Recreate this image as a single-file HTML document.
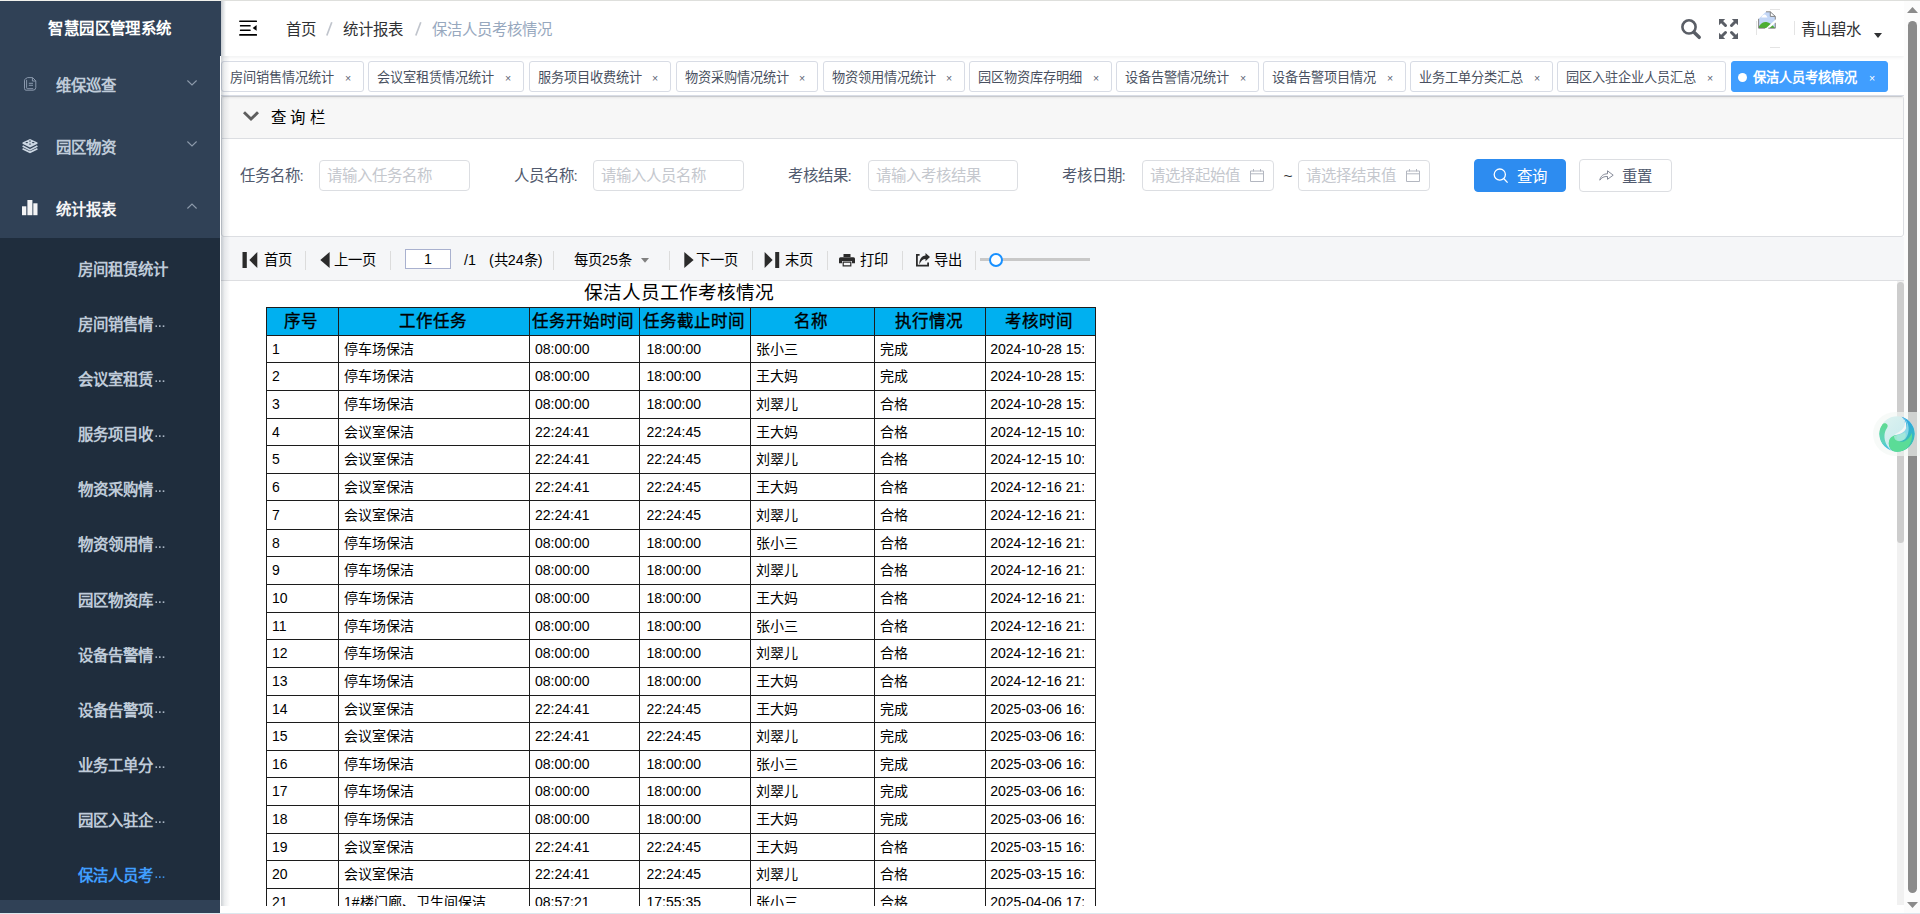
<!DOCTYPE html>
<html lang="zh-CN"><head><meta charset="utf-8"><title>智慧园区管理系统</title>
<style>
*{box-sizing:border-box;margin:0;padding:0}
html,body{width:1920px;height:914px;overflow:hidden;background:#fff;font-family:"Liberation Sans",sans-serif;color:#303133}
body{position:relative}
.a{position:absolute}
.t{position:absolute;white-space:nowrap}
svg{position:absolute;overflow:visible}
/* ---------- sidebar ---------- */
#side{position:absolute;left:0;top:0;width:220px;height:913px;background:#304156;z-index:5;overflow:hidden}
#logo{left:0;top:0;width:220px;height:56px;line-height:58px;text-align:center;color:#fff;font-weight:bold;font-size:15.4px;letter-spacing:.4px}
.mi{left:55.5px;height:30px;line-height:30px;color:#bfcbd9;font-size:15.4px;font-weight:bold}
#sub{position:absolute;left:0;top:238px;width:220px;height:662px;background:#1f2d3d}
.sub{left:77.5px;height:30px;line-height:30px;color:#bfcbd9;font-size:15.4px;font-weight:bold}
.sub.act{color:#409eff}
.el{font-size:11px;font-weight:bold;letter-spacing:0;position:relative;top:.2px;left:2.2px;opacity:.85}
/* ---------- navbar ---------- */
#nav{position:absolute;left:220px;top:0;width:1684px;height:56px;background:#fff;border-top:1px solid #dcdedc;box-shadow:0 1px 4px rgba(0,21,41,.08);z-index:3}
.bc{top:15px;height:30px;line-height:30px;font-size:15.4px;color:#303133}
.bc.sep{color:#c0c4cc;font-weight:bold;font-size:15px}
.bc.last{color:#97a8be}
/* ---------- tags ---------- */
#tags{position:absolute;left:220px;top:56px;width:1684px;height:40px;background:#fff;border-bottom:1px solid #d8dce5;box-shadow:0 1px 3px 0 rgba(0,0,0,.12),0 0 3px 0 rgba(0,0,0,.04);z-index:2}
.tag{position:absolute;top:61px;height:31px;border:1px solid #d8dce5;background:#fff;border-radius:3px;z-index:3}
.tag span{position:absolute;left:8px;top:1px;height:29px;line-height:30px;font-size:13.2px;color:#495060;white-space:nowrap}
.tag i{position:absolute;right:7px;top:1px;width:16px;height:29px;line-height:31px;text-align:center;font-style:normal;font-size:10.5px;color:#5d6472}
.tag.on{background:#409eff;border-color:#409eff}
.tag.on span{color:#fff;font-weight:bold;left:21px}
.tag.on i{color:#fff}
.tag.on b{position:absolute;left:6px;top:10.7px;width:9px;height:9px;border-radius:50%;background:#fff}
/* ---------- panel ---------- */
#panel{position:absolute;left:221px;top:96px;width:1683px;height:141px;border:1px solid #dcdee2;border-radius:3px;background:#fff;z-index:1}
#ph{position:absolute;left:0;top:0;width:1681px;height:42px;background:#f7f7f7;border-bottom:1px solid #dcdee2}
#pht{left:271px;top:103px;height:30px;line-height:30px;font-size:15.4px;color:#000;letter-spacing:4.3px;z-index:2}
.lab{top:160px;height:31px;line-height:31px;font-size:15.4px;color:#515a6e;z-index:2}
.inp{position:absolute;top:160px;height:31px;border:1px solid #dcdee2;border-radius:4px;background:#fff;z-index:2}
.inp span{position:absolute;left:7px;top:0;height:29px;line-height:30px;font-size:15.4px;color:#c5c8ce;white-space:nowrap}
.btn{position:absolute;top:159px;height:33px;border-radius:4px;border:1px solid #dcdee2;background:#fff;z-index:2}
.btn span{position:absolute;top:0;height:31px;line-height:33px;font-size:15.4px;color:#515a6e;white-space:nowrap}
.btn.pri{background:#2d8cf0;border-color:#2d8cf0}
.btn.pri span{color:#fff}
/* ---------- toolbar ---------- */
#tb{position:absolute;left:221px;top:237px;width:1683px;height:44px;background:#f5f6f8;border-bottom:1px solid #dddee1;z-index:1}
.tt{top:245px;height:30px;line-height:30px;font-size:14.3px;color:#000;z-index:2}
.sp{position:absolute;top:251px;width:1px;height:19px;background:#dcdcdc;z-index:2}
#pg{position:absolute;left:405px;top:249px;width:46px;height:20px;border:1px solid #a9b1cf;background:#fff;z-index:2;text-align:center;font-size:14.3px;line-height:18px;color:#000}
/* ---------- report ---------- */
#rep{position:absolute;left:221px;top:281px;width:1683px;height:625px;overflow:hidden;background:#fff}
#rin{position:absolute;left:-221px;top:-281px;width:1920px;height:1000px}
#ttl{left:263.7px;top:277.5px;width:830px;height:30px;line-height:30px;text-align:center;font-size:18.7px;color:#000}
.hd{position:absolute;background:#00b0f0}
.hl{position:absolute;left:266px;width:830px;height:1px;background:#1c1c1c}
.vl{position:absolute;top:307px;width:1px;height:620px;background:#1c1c1c}
.th{top:306px;height:30px;line-height:30px;text-align:center;font-size:16.5px;color:#000;-webkit-text-stroke:.35px #000}
.td{height:28px;line-height:28px;font-size:14px;color:#000;overflow:hidden}

</style></head>
<body>
<div id="side">
  <div id="logo" class="t">智慧园区管理系统</div>
  <!-- doc icon -->
  <svg style="left:23.6px;top:76.6px" width="13" height="14" viewBox="0 0 13 14" fill="none" stroke="#93a2b5" stroke-width=".9"><path d="M3.600 .600 H8.600 L11.800 3.800 V10.500 Q11.800 13.200 9 13.200 H2 Q.500 13.200 .500 11.500 V3.200 Q.500 2.400 1.500 1.800Z"/><path d="M2.600 2.800 V10.800 Q2.600 11.700 3.600 11.700 H9.200"/><path d="M8.400 .800 V4 H11.600"/><path d="M4.800 6.300 h4.200 M4.800 8.300 h4.200"/></svg>
  <!-- stack icon -->
  <svg style="left:21.7px;top:138.7px" width="16" height="14" viewBox="0 0 16 14"><path d="M8 0 L15.500 3.500 V4.700 L8 8.600 L.500 4.700 V3.500Z" fill="#cbd6e2"/><g fill="#304156"><ellipse cx="4.800" cy="3.600" rx="1.300" ry=".550"/><ellipse cx="11.200" cy="3.600" rx="1.300" ry=".550"/><ellipse cx="8" cy="1.900" rx="1.100" ry=".500"/><ellipse cx="8" cy="5.100" rx="1.100" ry=".500"/></g><path d="M.600 7.100 L8 10.900 L15.400 7.100M.600 9.700 L8 13.300 L15.400 9.700" fill="none" stroke="#cbd6e2" stroke-width="1.700"/></svg>
  <!-- bars icon -->
  <svg style="left:21.8px;top:199.8px" width="16" height="16" viewBox="0 0 16 16" fill="#f4f4f5"><rect x="0" y="6.3" width="4.3" height="8.9"/><rect x="5.4" y="0" width="5" height="15.2"/><rect x="11.3" y="3.3" width="4.2" height="11.9"/></svg>
  <div class="t mi" style="top:71.1px">维保巡查</div>
  <div class="t mi" style="top:132.8px">园区物资</div>
  <div class="t mi" style="top:194.8px;color:#f4f4f5">统计报表</div>
  <svg style="left:186.5px;top:79.5px" width="10" height="6" viewBox="0 0 10 6" fill="none" stroke="#8d9aab" stroke-width="1.1"><path d="M.4.5 L5 5 L9.6.5"/></svg>
  <svg style="left:186.5px;top:140.8px" width="10" height="6" viewBox="0 0 10 6" fill="none" stroke="#8d9aab" stroke-width="1.1"><path d="M.4.5 L5 5 L9.6.5"/></svg>
  <svg style="left:186.5px;top:203px" width="10" height="6" viewBox="0 0 10 6" fill="none" stroke="#8d9aab" stroke-width="1.1"><path d="M.4 5.5 L5 1 L9.6 5.5"/></svg>
  <div id="sub"></div>
  <div class="t sub" style="top:254.8px">房间租赁统计</div><div class="t sub" style="top:309.9px">房间销售情<span class="el">···</span></div><div class="t sub" style="top:365.0px">会议室租赁<span class="el">···</span></div><div class="t sub" style="top:420.1px">服务项目收<span class="el">···</span></div><div class="t sub" style="top:475.3px">物资采购情<span class="el">···</span></div><div class="t sub" style="top:530.4px">物资领用情<span class="el">···</span></div><div class="t sub" style="top:585.5px">园区物资库<span class="el">···</span></div><div class="t sub" style="top:640.7px">设备告警情<span class="el">···</span></div><div class="t sub" style="top:695.8px">设备告警项<span class="el">···</span></div><div class="t sub" style="top:750.9px">业务工单分<span class="el">···</span></div><div class="t sub" style="top:806.1px">园区入驻企<span class="el">···</span></div><div class="t sub act" style="top:861.2px">保洁人员考<span class="el">···</span></div>
</div>
<div class="a" style="left:220px;top:56px;width:1px;height:858px;background:#fff;z-index:6"></div>
<div class="a" style="left:221px;top:56px;width:9px;height:850px;background:linear-gradient(90deg,rgba(0,21,41,.2),rgba(0,21,41,.07) 40%,rgba(0,21,41,0));z-index:6"></div>
<div class="a" style="left:221px;top:1px;width:5px;height:55px;background:linear-gradient(90deg,rgba(0,21,41,.22),rgba(0,21,41,0));z-index:6"></div>
<div class="a" style="left:0;top:912.6px;width:1920px;height:2px;background:#dce8ee;z-index:9"></div>

<div id="nav"></div>
<div class="a" style="left:0;top:0;width:221px;height:1px;background:#f1f1ec;z-index:11"></div>
<div class="a" style="left:221px;top:0;width:1699px;height:1px;background:#dedfdc;z-index:11"></div>
<div class="a" style="left:220px;top:0;width:1px;height:56px;background:#304156;z-index:6"></div>
<!-- hamburger -->
<svg style="left:239px;top:20px;z-index:4" width="19" height="16" viewBox="0 0 19 16" fill="#000"><rect x=".2" y=".4" width="17.8" height="1.650" rx=".5"/><rect x=".9" y="5" width="10.800" height="1.500" rx=".5"/><rect x=".9" y="9.500" width="10.800" height="1.500" rx=".5"/><rect x=".2" y="14" width="17.800" height="1.700" rx=".5"/><path d="M13.700 8.100 L17.600 5 V10.800Z"/></svg>
<div class="t bc" style="left:285.5px;z-index:4">首页</div>
<svg style="left:325px;top:21px;z-index:4" width="9" height="16" viewBox="0 0 9 16"><path d="M6.8 1.2 L1.8 14.5" stroke="#c0c4cc" stroke-width="1.7" fill="none"/></svg>
<div class="t bc" style="left:343px;z-index:4">统计报表</div>
<svg style="left:413.5px;top:21px;z-index:4" width="9" height="16" viewBox="0 0 9 16"><path d="M6.8 1.2 L1.8 14.5" stroke="#c0c4cc" stroke-width="1.7" fill="none"/></svg>
<div class="t bc last" style="left:431.5px;z-index:4">保洁人员考核情况</div>
<!-- search -->
<svg style="left:1680px;top:18px;z-index:4" width="22" height="22" viewBox="0 0 22 22" fill="none" stroke="#5a5e66"><circle cx="9" cy="8.900" r="6.600" stroke-width="2.600"/><path d="M14 14.200 L19.200 19.300" stroke-width="3.500" stroke-linecap="round"/></svg>
<!-- fullscreen -->
<svg style="left:1719px;top:19px;z-index:4" width="19" height="20" viewBox="0 0 19 20" fill="#5a5e66" stroke="#5a5e66"><path d="M0 0h6.200L0 6.200Z M19 0v6.200L12.800 0Z M0 20v-6.200l6.200 6.200Z M19 20h-6.200l6.200-6.200Z" stroke="none"/><path d="M2.500 2.500L6.500 6.500M16.500 2.500L12.500 6.500M2.500 17.500L6.500 13.500M16.500 17.500L12.500 13.500" stroke-width="3" stroke-linecap="round"/></svg>
<!-- avatar (broken image) -->
<div class="a" style="left:1756px;top:9px;width:39px;height:39px;border:1px solid #e4e4e4;border-radius:10px;z-index:4;-webkit-mask:linear-gradient(#000,#000) 14px 0/10px 100% no-repeat,linear-gradient(#000,#000) 0 12px/100% 14px no-repeat;-webkit-mask-composite:xor"></div>
<svg style="left:1758px;top:11px;z-index:4" width="18" height="18" viewBox="0 0 18 18"><path d="M1 7.600 L7.700 1 H12.300 L17 5.400 V17 H1z" fill="#c3d7f7"/><path d="M3.200 6.400 C4 4.500 5.500 3.500 6.600 3.400 C7.500 3.300 8.500 4.500 9.500 6.400z" fill="#fff"/><path d="M1 16.900 V15.300 C3 12 6 10.500 8.500 11 C11.500 11.500 14.500 14 17 16.900z" fill="#4cae33"/><path d="M6.500 18.500 L18.500 7.800 L18.500 10.800 L9.800 18.500z" fill="#fff"/><path d="M12.300 1 V5.400 H17z" fill="#fff"/><path d="M.600 7.800 V17.200 H7.200 M10.300 17.200 H17.300 V11.800 M17.300 8.600 V5.400 L12.300 .800 H8 M12.300 .800 V5.400 H17.300" stroke="#777" stroke-width=".9" fill="none"/></svg>
<div class="t bc" style="left:1801px;z-index:4">青山碧水</div>
<svg style="left:1873.500px;top:33.200px;z-index:4" width="8" height="5" viewBox="0 0 8 5"><path d="M0 0h8L4 5z" fill="#303133"/></svg>

<div id="tags"></div>
<div class="tag" style="left:221px;width:143px"><span>房间销售情况统计</span><i>×</i></div><div class="tag" style="left:368px;width:156px"><span>会议室租赁情况统计</span><i>×</i></div><div class="tag" style="left:529px;width:142px"><span>服务项目收费统计</span><i>×</i></div><div class="tag" style="left:676px;width:142px"><span>物资采购情况统计</span><i>×</i></div><div class="tag" style="left:822.5px;width:142.5px"><span>物资领用情况统计</span><i>×</i></div><div class="tag" style="left:969px;width:143px"><span>园区物资库存明细</span><i>×</i></div><div class="tag" style="left:1116px;width:143px"><span>设备告警情况统计</span><i>×</i></div><div class="tag" style="left:1263px;width:143px"><span>设备告警项目情况</span><i>×</i></div><div class="tag" style="left:1410px;width:143px"><span>业务工单分类汇总</span><i>×</i></div><div class="tag" style="left:1557px;width:169px"><span>园区入驻企业人员汇总</span><i>×</i></div><div class="tag on" style="left:1731px;width:157px"><b></b><span>保洁人员考核情况</span><i>×</i></div>

<div id="panel"><div id="ph"></div></div>
<svg style="left:243px;top:111px;z-index:2" width="16" height="10" viewBox="0 0 16 10" fill="none" stroke="#5e5e5e" stroke-width="2.900"><path d="M1 1.300 L8 8 L15 1.300"/></svg>
<div id="pht" class="t">查询栏</div>
<div class="t lab" style="left:239.5px">任务名称:</div><div class="inp" style="left:319px;width:151px"><span>请输入任务名称</span></div>
<div class="t lab" style="left:513.5px">人员名称:</div><div class="inp" style="left:593px;width:151px"><span>请输入人员名称</span></div>
<div class="t lab" style="left:787.5px">考核结果:</div><div class="inp" style="left:868px;width:150px"><span>请输入考核结果</span></div>
<div class="t lab" style="left:1061.5px">考核日期:</div><div class="inp" style="left:1142px;width:132px"><span>请选择起始值</span><svg style="left:107px;top:8px" width="14" height="13" viewBox="0 0 14 13" fill="none" stroke="#b3b7c0" stroke-width="1"><path d="M.5 2h13v10.500H.5zM.5 4.800h13M3.500 0v2.500M10.500 0v2.500"/></svg></div>
<div class="t lab" style="left:1283.500px;color:#303133">~</div><div class="inp" style="left:1298px;width:132px"><span>请选择结束值</span><svg style="left:107px;top:8px" width="14" height="13" viewBox="0 0 14 13" fill="none" stroke="#b3b7c0" stroke-width="1"><path d="M.5 2h13v10.500H.5zM.5 4.800h13M3.500 0v2.500M10.500 0v2.500"/></svg></div>
<div class="btn pri" style="left:1474px;width:92px"><svg style="left:18px;top:8px" width="16" height="16" viewBox="0 0 16 16" fill="none" stroke="#fff" stroke-width="1.300"><circle cx="6.800" cy="6.600" r="5.600"/><path d="M10.900 10.800 L14.600 14.600"/></svg><span style="left:42px">查询</span></div>
<div class="btn" style="left:1579px;width:93px"><svg style="left:19px;top:10px" width="15" height="11" viewBox="0 0 15 11" fill="none" stroke="#7d8391" stroke-width=".95" stroke-linejoin="round"><path d="M.800 10.200 C1.500 6 4.500 3.800 8.500 3.800 V.800 L14.200 5.200 L8.500 9.300 V6.500 C5 6.300 2.500 7.500 .800 10.200Z"/></svg><span style="left:42px">重置</span></div>

<div id="tb"></div>
<svg style="left:242px;top:252px;z-index:2" width="16" height="16" viewBox="0 0 16 16" fill="#2b2b2b"><rect x=".5" y="0" width="4.300" height="16"/><path d="M15.300 0v16L7.300 8z"/></svg>
<div class="t tt" style="left:263.500px">首页</div>
<div class="sp" style="left:305px"></div>
<svg style="left:320px;top:252px;z-index:2" width="10" height="16" viewBox="0 0 10 16" fill="#2b2b2b"><path d="M9.600 0v16L.300 8z"/></svg>
<div class="t tt" style="left:334px">上一页</div>
<div class="sp" style="left:390px"></div>
<div id="pg">1</div>
<div class="t tt" style="left:464px">/1</div>
<div class="t tt" style="left:489px">(共24条)</div>
<div class="sp" style="left:553px"></div>
<div class="t tt" style="left:574px">每页25条</div>
<svg style="left:641px;top:257.500px;z-index:2" width="8" height="5" viewBox="0 0 8 5"><path d="M0 0h8L4 4.800z" fill="#808080"/></svg>
<div class="sp" style="left:669px"></div>
<svg style="left:684px;top:252px;z-index:2" width="10" height="16" viewBox="0 0 10 16" fill="#2b2b2b"><path d="M.300 0v16L9.600 8z"/></svg>
<div class="t tt" style="left:696px">下一页</div>
<div class="sp" style="left:752px"></div>
<svg style="left:764px;top:252px;z-index:2" width="16" height="16" viewBox="0 0 16 16" fill="#2b2b2b"><path d="M.600 0v16L8.600 8z"/><rect x="11.200" y="0" width="4" height="16"/></svg>
<div class="t tt" style="left:785px">末页</div>
<div class="sp" style="left:827px"></div>
<!-- printer -->
<svg style="left:839px;top:254px;z-index:2" width="16" height="12" viewBox="0 0 16 12" fill="#2b2b2b"><path d="M4.500 0h7v3h-7z"/><path d="M1.500 3.300h13a1.500 1.500 0 0 1 1.500 1.500v4.400h-3V7H3v2.200H0V4.800a1.500 1.500 0 0 1 1.500-1.500z"/><path d="M4.200 8.200h7.600v3.600H4.200z" fill="none" stroke="#2b2b2b" stroke-width="1.200"/></svg>
<div class="t tt" style="left:860px">打印</div>
<div class="sp" style="left:902px"></div>
<!-- export -->
<svg style="left:915.500px;top:253px;z-index:2" width="14" height="14" viewBox="0 0 14 14" fill="#2b2b2b"><path d="M0 1h3.600v1.800H1.800v8.900h9.400V9.600h1.800v3.900H0z"/><path d="M9.500 0 L14 4 L9.500 8.300 V6 C7 6 5 7.500 3.400 11.400 C3 6.500 5.500 2.800 9.500 2.400Z"/></svg>
<div class="t tt" style="left:934px">导出</div>
<div class="sp" style="left:975px"></div>
<div class="a" style="left:980px;top:258px;width:110px;height:3px;background:#c8c8c8;z-index:2"></div>
<div class="a" style="left:989px;top:252.500px;width:14px;height:14px;border:2px solid #1890ff;border-radius:50%;background:#fff;z-index:2"></div>

<div id="rep"><div id="rin">
  <div id="ttl" class="t">保洁人员工作考核情况</div>
  <div class="hd" style="left:266px;top:307px;width:830px;height:29px"></div><div class="hl" style="top:307px"></div><div class="hl" style="top:335px"></div><div class="hl" style="top:362px"></div><div class="hl" style="top:390px"></div><div class="hl" style="top:418px"></div><div class="hl" style="top:445px"></div><div class="hl" style="top:473px"></div><div class="hl" style="top:500px"></div><div class="hl" style="top:529px"></div><div class="hl" style="top:556px"></div><div class="hl" style="top:584px"></div><div class="hl" style="top:612px"></div><div class="hl" style="top:639px"></div><div class="hl" style="top:667px"></div><div class="hl" style="top:695px"></div><div class="hl" style="top:722px"></div><div class="hl" style="top:750px"></div><div class="hl" style="top:777px"></div><div class="hl" style="top:805px"></div><div class="hl" style="top:833px"></div><div class="hl" style="top:860px"></div><div class="hl" style="top:888px"></div><div class="hl" style="top:916px"></div><div class="hl" style="top:944px"></div><div class="vl" style="left:266px"></div><div class="vl" style="left:338px"></div><div class="vl" style="left:529px"></div><div class="vl" style="left:639px"></div><div class="vl" style="left:750px"></div><div class="vl" style="left:874px"></div><div class="vl" style="left:985px"></div><div class="vl" style="left:1095px"></div><div class="t th" style="left:265px;width:72px">序号</div><div class="t th" style="left:337px;width:191px">工作任务</div><div class="t th" style="left:528px;width:110px">任务开始时间</div><div class="t th" style="left:638px;width:111px">任务截止时间</div><div class="t th" style="left:749px;width:124px">名称</div><div class="t th" style="left:873px;width:111px">执行情况</div><div class="t th" style="left:984px;width:110px">考核时间</div><div class="t td" style="left:272.0px;top:334.6px;width:66px">1</div><div class="t td" style="left:344.0px;top:334.6px;width:185px">停车场保洁</div><div class="t td" style="left:535.0px;top:334.6px;width:104px">08:00:00</div><div class="t td" style="left:646.5px;top:334.6px;width:105px">18:00:00</div><div class="t td" style="left:756.0px;top:334.6px;width:118px">张小三</div><div class="t td" style="left:880.0px;top:334.6px;width:105px">完成</div><div class="t td" style="left:990.2px;top:334.6px;width:94px">2024-10-28 15:</div><div class="t td" style="left:272.0px;top:362.1px;width:66px">2</div><div class="t td" style="left:344.0px;top:362.1px;width:185px">停车场保洁</div><div class="t td" style="left:535.0px;top:362.1px;width:104px">08:00:00</div><div class="t td" style="left:646.5px;top:362.1px;width:105px">18:00:00</div><div class="t td" style="left:756.0px;top:362.1px;width:118px">王大妈</div><div class="t td" style="left:880.0px;top:362.1px;width:105px">完成</div><div class="t td" style="left:990.2px;top:362.1px;width:94px">2024-10-28 15:</div><div class="t td" style="left:272.0px;top:390.1px;width:66px">3</div><div class="t td" style="left:344.0px;top:390.1px;width:185px">停车场保洁</div><div class="t td" style="left:535.0px;top:390.1px;width:104px">08:00:00</div><div class="t td" style="left:646.5px;top:390.1px;width:105px">18:00:00</div><div class="t td" style="left:756.0px;top:390.1px;width:118px">刘翠儿</div><div class="t td" style="left:880.0px;top:390.1px;width:105px">合格</div><div class="t td" style="left:990.2px;top:390.1px;width:94px">2024-10-28 15:</div><div class="t td" style="left:272.0px;top:417.6px;width:66px">4</div><div class="t td" style="left:344.0px;top:417.6px;width:185px">会议室保洁</div><div class="t td" style="left:535.0px;top:417.6px;width:104px">22:24:41</div><div class="t td" style="left:646.5px;top:417.6px;width:105px">22:24:45</div><div class="t td" style="left:756.0px;top:417.6px;width:118px">王大妈</div><div class="t td" style="left:880.0px;top:417.6px;width:105px">合格</div><div class="t td" style="left:990.2px;top:417.6px;width:94px">2024-12-15 10:</div><div class="t td" style="left:272.0px;top:445.1px;width:66px">5</div><div class="t td" style="left:344.0px;top:445.1px;width:185px">会议室保洁</div><div class="t td" style="left:535.0px;top:445.1px;width:104px">22:24:41</div><div class="t td" style="left:646.5px;top:445.1px;width:105px">22:24:45</div><div class="t td" style="left:756.0px;top:445.1px;width:118px">刘翠儿</div><div class="t td" style="left:880.0px;top:445.1px;width:105px">合格</div><div class="t td" style="left:990.2px;top:445.1px;width:94px">2024-12-15 10:</div><div class="t td" style="left:272.0px;top:472.6px;width:66px">6</div><div class="t td" style="left:344.0px;top:472.6px;width:185px">会议室保洁</div><div class="t td" style="left:535.0px;top:472.6px;width:104px">22:24:41</div><div class="t td" style="left:646.5px;top:472.6px;width:105px">22:24:45</div><div class="t td" style="left:756.0px;top:472.6px;width:118px">王大妈</div><div class="t td" style="left:880.0px;top:472.6px;width:105px">合格</div><div class="t td" style="left:990.2px;top:472.6px;width:94px">2024-12-16 21:</div><div class="t td" style="left:272.0px;top:500.6px;width:66px">7</div><div class="t td" style="left:344.0px;top:500.6px;width:185px">会议室保洁</div><div class="t td" style="left:535.0px;top:500.6px;width:104px">22:24:41</div><div class="t td" style="left:646.5px;top:500.6px;width:105px">22:24:45</div><div class="t td" style="left:756.0px;top:500.6px;width:118px">刘翠儿</div><div class="t td" style="left:880.0px;top:500.6px;width:105px">合格</div><div class="t td" style="left:990.2px;top:500.6px;width:94px">2024-12-16 21:</div><div class="t td" style="left:272.0px;top:528.6px;width:66px">8</div><div class="t td" style="left:344.0px;top:528.6px;width:185px">停车场保洁</div><div class="t td" style="left:535.0px;top:528.6px;width:104px">08:00:00</div><div class="t td" style="left:646.5px;top:528.6px;width:105px">18:00:00</div><div class="t td" style="left:756.0px;top:528.6px;width:118px">张小三</div><div class="t td" style="left:880.0px;top:528.6px;width:105px">合格</div><div class="t td" style="left:990.2px;top:528.6px;width:94px">2024-12-16 21:</div><div class="t td" style="left:272.0px;top:556.1px;width:66px">9</div><div class="t td" style="left:344.0px;top:556.1px;width:185px">停车场保洁</div><div class="t td" style="left:535.0px;top:556.1px;width:104px">08:00:00</div><div class="t td" style="left:646.5px;top:556.1px;width:105px">18:00:00</div><div class="t td" style="left:756.0px;top:556.1px;width:118px">刘翠儿</div><div class="t td" style="left:880.0px;top:556.1px;width:105px">合格</div><div class="t td" style="left:990.2px;top:556.1px;width:94px">2024-12-16 21:</div><div class="t td" style="left:272.0px;top:584.1px;width:66px">10</div><div class="t td" style="left:344.0px;top:584.1px;width:185px">停车场保洁</div><div class="t td" style="left:535.0px;top:584.1px;width:104px">08:00:00</div><div class="t td" style="left:646.5px;top:584.1px;width:105px">18:00:00</div><div class="t td" style="left:756.0px;top:584.1px;width:118px">王大妈</div><div class="t td" style="left:880.0px;top:584.1px;width:105px">合格</div><div class="t td" style="left:990.2px;top:584.1px;width:94px">2024-12-16 21:</div><div class="t td" style="left:272.0px;top:611.6px;width:66px">11</div><div class="t td" style="left:344.0px;top:611.6px;width:185px">停车场保洁</div><div class="t td" style="left:535.0px;top:611.6px;width:104px">08:00:00</div><div class="t td" style="left:646.5px;top:611.6px;width:105px">18:00:00</div><div class="t td" style="left:756.0px;top:611.6px;width:118px">张小三</div><div class="t td" style="left:880.0px;top:611.6px;width:105px">合格</div><div class="t td" style="left:990.2px;top:611.6px;width:94px">2024-12-16 21:</div><div class="t td" style="left:272.0px;top:639.1px;width:66px">12</div><div class="t td" style="left:344.0px;top:639.1px;width:185px">停车场保洁</div><div class="t td" style="left:535.0px;top:639.1px;width:104px">08:00:00</div><div class="t td" style="left:646.5px;top:639.1px;width:105px">18:00:00</div><div class="t td" style="left:756.0px;top:639.1px;width:118px">刘翠儿</div><div class="t td" style="left:880.0px;top:639.1px;width:105px">合格</div><div class="t td" style="left:990.2px;top:639.1px;width:94px">2024-12-16 21:</div><div class="t td" style="left:272.0px;top:667.1px;width:66px">13</div><div class="t td" style="left:344.0px;top:667.1px;width:185px">停车场保洁</div><div class="t td" style="left:535.0px;top:667.1px;width:104px">08:00:00</div><div class="t td" style="left:646.5px;top:667.1px;width:105px">18:00:00</div><div class="t td" style="left:756.0px;top:667.1px;width:118px">王大妈</div><div class="t td" style="left:880.0px;top:667.1px;width:105px">合格</div><div class="t td" style="left:990.2px;top:667.1px;width:94px">2024-12-16 21:</div><div class="t td" style="left:272.0px;top:694.6px;width:66px">14</div><div class="t td" style="left:344.0px;top:694.6px;width:185px">会议室保洁</div><div class="t td" style="left:535.0px;top:694.6px;width:104px">22:24:41</div><div class="t td" style="left:646.5px;top:694.6px;width:105px">22:24:45</div><div class="t td" style="left:756.0px;top:694.6px;width:118px">王大妈</div><div class="t td" style="left:880.0px;top:694.6px;width:105px">完成</div><div class="t td" style="left:990.2px;top:694.6px;width:94px">2025-03-06 16:</div><div class="t td" style="left:272.0px;top:722.1px;width:66px">15</div><div class="t td" style="left:344.0px;top:722.1px;width:185px">会议室保洁</div><div class="t td" style="left:535.0px;top:722.1px;width:104px">22:24:41</div><div class="t td" style="left:646.5px;top:722.1px;width:105px">22:24:45</div><div class="t td" style="left:756.0px;top:722.1px;width:118px">刘翠儿</div><div class="t td" style="left:880.0px;top:722.1px;width:105px">完成</div><div class="t td" style="left:990.2px;top:722.1px;width:94px">2025-03-06 16:</div><div class="t td" style="left:272.0px;top:749.6px;width:66px">16</div><div class="t td" style="left:344.0px;top:749.6px;width:185px">停车场保洁</div><div class="t td" style="left:535.0px;top:749.6px;width:104px">08:00:00</div><div class="t td" style="left:646.5px;top:749.6px;width:105px">18:00:00</div><div class="t td" style="left:756.0px;top:749.6px;width:118px">张小三</div><div class="t td" style="left:880.0px;top:749.6px;width:105px">完成</div><div class="t td" style="left:990.2px;top:749.6px;width:94px">2025-03-06 16:</div><div class="t td" style="left:272.0px;top:777.1px;width:66px">17</div><div class="t td" style="left:344.0px;top:777.1px;width:185px">停车场保洁</div><div class="t td" style="left:535.0px;top:777.1px;width:104px">08:00:00</div><div class="t td" style="left:646.5px;top:777.1px;width:105px">18:00:00</div><div class="t td" style="left:756.0px;top:777.1px;width:118px">刘翠儿</div><div class="t td" style="left:880.0px;top:777.1px;width:105px">完成</div><div class="t td" style="left:990.2px;top:777.1px;width:94px">2025-03-06 16:</div><div class="t td" style="left:272.0px;top:805.1px;width:66px">18</div><div class="t td" style="left:344.0px;top:805.1px;width:185px">停车场保洁</div><div class="t td" style="left:535.0px;top:805.1px;width:104px">08:00:00</div><div class="t td" style="left:646.5px;top:805.1px;width:105px">18:00:00</div><div class="t td" style="left:756.0px;top:805.1px;width:118px">王大妈</div><div class="t td" style="left:880.0px;top:805.1px;width:105px">完成</div><div class="t td" style="left:990.2px;top:805.1px;width:94px">2025-03-06 16:</div><div class="t td" style="left:272.0px;top:832.6px;width:66px">19</div><div class="t td" style="left:344.0px;top:832.6px;width:185px">会议室保洁</div><div class="t td" style="left:535.0px;top:832.6px;width:104px">22:24:41</div><div class="t td" style="left:646.5px;top:832.6px;width:105px">22:24:45</div><div class="t td" style="left:756.0px;top:832.6px;width:118px">王大妈</div><div class="t td" style="left:880.0px;top:832.6px;width:105px">合格</div><div class="t td" style="left:990.2px;top:832.6px;width:94px">2025-03-15 16:</div><div class="t td" style="left:272.0px;top:860.1px;width:66px">20</div><div class="t td" style="left:344.0px;top:860.1px;width:185px">会议室保洁</div><div class="t td" style="left:535.0px;top:860.1px;width:104px">22:24:41</div><div class="t td" style="left:646.5px;top:860.1px;width:105px">22:24:45</div><div class="t td" style="left:756.0px;top:860.1px;width:118px">刘翠儿</div><div class="t td" style="left:880.0px;top:860.1px;width:105px">合格</div><div class="t td" style="left:990.2px;top:860.1px;width:94px">2025-03-15 16:</div><div class="t td" style="left:272.0px;top:888.1px;width:66px">21</div><div class="t td" style="left:344.0px;top:888.1px;width:185px">1#楼门廊、卫生间保洁</div><div class="t td" style="left:535.0px;top:888.1px;width:104px">08:57:21</div><div class="t td" style="left:646.5px;top:888.1px;width:105px">17:55:35</div><div class="t td" style="left:756.0px;top:888.1px;width:118px">张小三</div><div class="t td" style="left:880.0px;top:888.1px;width:105px">合格</div><div class="t td" style="left:990.2px;top:888.1px;width:94px">2025-04-06 17:</div><div class="t td" style="left:272.0px;top:916.1px;width:66px">22</div><div class="t td" style="left:344.0px;top:916.1px;width:185px">1#楼门廊、卫生间保洁</div><div class="t td" style="left:535.0px;top:916.1px;width:104px">08:57:21</div><div class="t td" style="left:646.5px;top:916.1px;width:105px">17:55:35</div><div class="t td" style="left:756.0px;top:916.1px;width:118px">王大妈</div><div class="t td" style="left:880.0px;top:916.1px;width:105px">合格</div><div class="t td" style="left:990.2px;top:916.1px;width:94px">2025-04-06 17:</div>
</div></div>
<!-- inner scrollbar -->
<div class="a" style="left:1897px;top:281px;width:7px;height:624px;background:#f1f1f1;z-index:2"></div>
<div class="a" style="left:1897px;top:282px;width:7px;height:261px;background:#cdcdcd;border-radius:3.500px;z-index:2"></div>
<!-- outer scrollbar -->
<div class="a" style="left:1904px;top:1px;width:16px;height:912px;background:#fcfcfc;z-index:7"></div>
<svg style="left:1907px;top:7px;z-index:8" width="11" height="6" viewBox="0 0 11 6"><path d="M0 6h11L5.500 0z" fill="#8b8b8b"/></svg>
<div class="a" style="left:1908px;top:21px;width:9px;height:872px;background:#8b8b8b;border-radius:4.500px;z-index:8"></div>
<svg style="left:1907px;top:901.500px;z-index:8" width="11" height="6" viewBox="0 0 11 6"><path d="M0 0h11L5.500 6z" fill="#8b8b8b"/></svg>
<!-- floating widget -->
<div class="a" style="left:1873px;top:412px;width:60px;height:44px;border-radius:22px 0 0 22px;background:rgba(243,248,245,.66);z-index:9"></div>
<svg style="left:1878.500px;top:415.500px;z-index:10" width="36" height="36" viewBox="0 0 36 36">
  <defs>
    <linearGradient id="g1" x1="0" y1="0" x2="1" y2="1"><stop offset="0" stop-color="#dff3f0"/><stop offset="1" stop-color="#bfe6ec"/></linearGradient>
    <linearGradient id="g2" x1="0" y1="0" x2="0" y2="1"><stop offset="0" stop-color="#2da5e8"/><stop offset="1" stop-color="#3fc7a4"/></linearGradient>
    <linearGradient id="g3" x1="0" y1="0" x2="0" y2="1"><stop offset="0" stop-color="#5fdb8f"/><stop offset=".7" stop-color="#5fd3c0"/><stop offset="1" stop-color="#3ab6ee"/></linearGradient>
    <clipPath id="cc"><circle cx="18" cy="18" r="17.800"/></clipPath>
  </defs>
  <g clip-path="url(#cc)">
    <circle cx="18" cy="18" r="18" fill="url(#g1)"/>
    <path d="M22 0 C30 2 36 9 36 18 C36 28 28 36 18 36 C12 36 9 30 10 26 C12 20 18 19 22 17 C27 14 28 6 22 0Z" fill="url(#g2)"/>
    <path d="M15 20 C20 17 25 17 27 12 C29 8 27 4 24 1 C31 6 31 17 27 22 C24 26 17 26 15 20Z" fill="#9ee0ee" opacity=".8"/>
    
    <path d="M10 25 C11 20 16 19 19 19 C16 23 20 27 25 25.500 C29 24 31 21 33 17 C34 28 27 36 18 36 C12 36 9 30 10 25Z" fill="#5bdc97"/>
    <path d="M15 20 C19 18.500 24 18 26 16 C28 20 26 24 22 25 C18 26 15 23.500 15 20Z" fill="#a8ead8" opacity=".85"/>
    <path d="M15 18.800 C19 16.500 25 14 25.800 8.500 C26 5.500 24.800 3 23 1.200 C26.500 3.500 28 8 27 12.500 C26 16 21 18.800 15 18.800Z" fill="#f4f6f6"/>
    <path d="M3 9 C4 6.500 7.500 6.500 8.500 9 C9.500 11.500 6 13 5.500 19 C5 25 8 31 12.500 34.500 C5 32 0 25 0 18 C0 14 1.500 11 3 9Z" fill="url(#g3)"/>
  </g>
</svg>

</body></html>
